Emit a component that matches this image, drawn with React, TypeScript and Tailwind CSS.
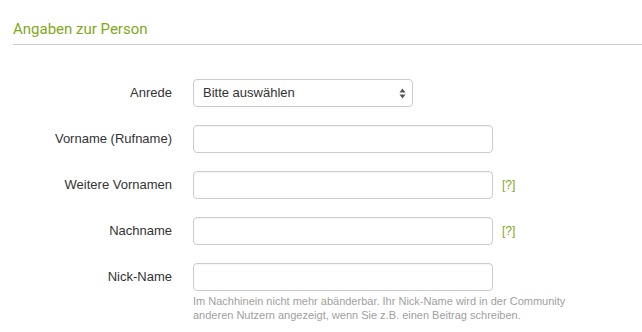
import React from "react";

const Label = ({ children }: { children: React.ReactNode }) => (
  <div className="w-[159px] shrink-0 text-right text-[13px] text-[#333] leading-[28px]">{children}</div>
);

const Input = () => (
  <div className="w-[300px] h-[28px] shrink-0 rounded-[4px] border border-[#cccccc] bg-white shadow-[inset_0_1px_1px_rgba(0,0,0,0.04)]" />
);

const Help = () => (
  <span className="ml-[9px] text-[12px] text-[#7fa81c] leading-[28px]">[?]</span>
);

export default function App() {
  return (
    <div className="w-[642px] h-[332px] bg-white overflow-hidden" style={{ fontFamily: '"Liberation Sans", Arial, sans-serif' }}>
      <div className="pl-[13px] pt-[18px]">
        <div className="pb-[4px] border-b border-[#cccccc] text-[15px] leading-[22px] text-[#7fa81c]" style={{ fontFamily: 'Roboto, sans-serif' }}>
          Angaben zur Person
        </div>
        <div className="mt-[34px] flex flex-col gap-[18px]">
          <div className="flex items-center gap-[21px]">
            <Label>Anrede</Label>
            <div className="relative w-[220px] h-[28px] rounded-[4px] border border-[#cccccc] bg-white flex items-center pl-[9px] text-[13px] text-[#333]">
              Bitte auswählen
              <svg className="absolute right-[6px] top-[8px]" width="7" height="11" viewBox="0 0 7 11">
                <path d="M3.5 0.5 L6.5 4.5 L0.5 4.5 Z" fill="#555" />
                <path d="M3.5 10.5 L6.5 6.5 L0.5 6.5 Z" fill="#555" />
              </svg>
            </div>
          </div>
          <div className="flex items-center gap-[21px]">
            <Label>Vorname (Rufname)</Label>
            <Input />
          </div>
          <div className="flex items-center gap-[21px]">
            <Label>Weitere Vornamen</Label>
            <div className="flex items-center">
              <Input />
              <Help />
            </div>
          </div>
          <div className="flex items-center gap-[21px]">
            <Label>Nachname</Label>
            <div className="flex items-center">
              <Input />
              <Help />
            </div>
          </div>
          <div className="flex items-start gap-[21px]">
            <Label>Nick-Name</Label>
            <div>
              <Input />
              <p className="mt-[3px] text-[11px] leading-[14px] text-[#a0a0a0]">
                Im Nachhinein nicht mehr abänderbar. Ihr Nick-Name wird in der Community
                <br />
                anderen Nutzern angezeigt, wenn Sie z.B. einen Beitrag schreiben.
              </p>
            </div>
          </div>
        </div>
      </div>
    </div>
  );
}
